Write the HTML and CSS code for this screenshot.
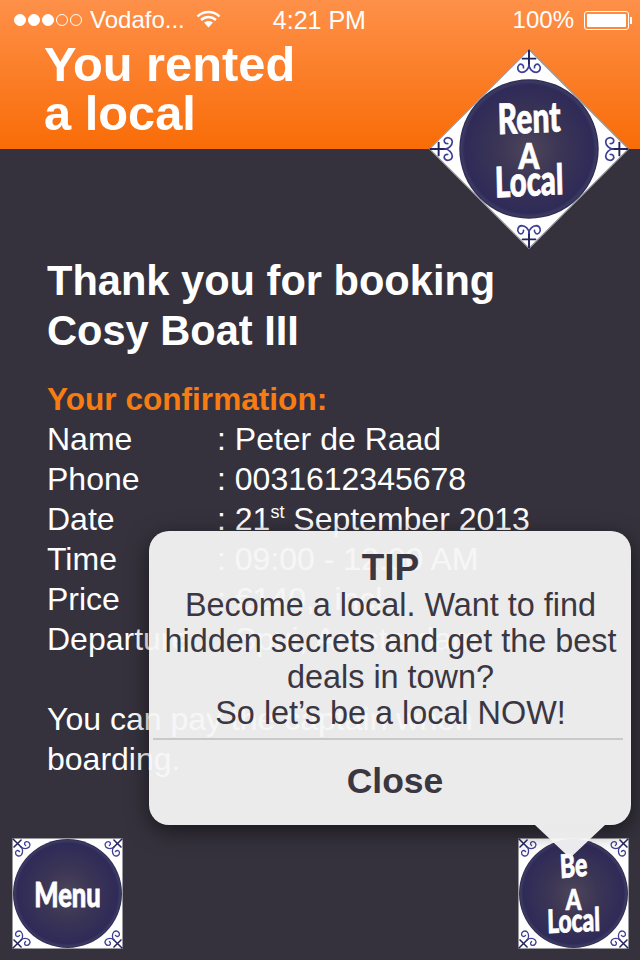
FILE: index.html
```html
<!DOCTYPE html>
<html lang="en">
<head>
<meta charset="utf-8">
<title>You rented a local</title>
<link rel="stylesheet" href="styles.css">
</head>
<body>
<svg class="defs" width="0" height="0" aria-hidden="true">
  <defs>
    <radialGradient id="disc" cx="50%" cy="50%" r="50%">
      <stop offset="0" stop-color="#4c4559"/>
      <stop offset="0.5" stop-color="#3a3455"/>
      <stop offset="0.92" stop-color="#2f2b58"/>
      <stop offset="0.97" stop-color="#3d3a62"/>
      <stop offset="1" stop-color="#2a2850"/>
    </radialGradient>
    <g id="orn" fill="none" stroke="#3f3f96" stroke-width="1.3" stroke-linecap="round">
      <path d="M1 1 L9 9 M2 9 L9 2" stroke="#23235e" stroke-width="1.5"/>
      <path d="M9 9 C11 11 15 11 17 9 C19 6.500 17 3.500 14.500 3.500 C12.500 3.500 11.500 6 13.500 7.500"/>
      <path d="M9 9 C11 11 11 15 9 17 C6.500 19 3.500 17 3.500 14.500 C3.500 12.500 6 11.500 7.500 13.500"/>
    </g>
    <g id="tile">
      <rect x="0.5" y="0.5" width="109" height="109" fill="#fff" stroke="#9a9a9e"/>
      <use href="#orn"/>
      <use href="#orn" transform="translate(110 0) scale(-1 1)"/>
      <use href="#orn" transform="translate(0 110) scale(1 -1)"/>
      <use href="#orn" transform="translate(110 110) scale(-1 -1)"/>
      <circle cx="55" cy="55" r="54" fill="url(#disc)"/>
    </g>
  </defs>
</svg>
<div class="screen">
  <header class="top">
    <div class="status">
      <div class="status-left">
        <span class="dots"><i class="on"></i><i class="on"></i><i class="on"></i><i></i><i></i></span>
        <span class="carrier">Vodafo...</span>
        <svg class="wifi" width="25" height="18" viewBox="0 0 24 18" aria-hidden="true">
          <path d="M1 6.500 C7 0.500 17 0.500 23 6.500 M4.500 10 C9 6 15 6 19.500 10" fill="none" stroke="#fff" stroke-width="2.400"/>
          <path d="M7.500 12.500 C10 10.400 14 10.400 16.500 12.500 L12 17.500 Z" fill="#fff"/>
        </svg>
      </div>
      <span class="clock">4:21 PM</span>
      <div class="status-right">
        <span>100%</span>
        <span class="battery"><span class="battery-fill"></span></span>
        <span class="battery-tip"></span>
      </div>
    </div>
    <h1 class="page-title">You rented<br>a local</h1>
  </header>

  <main class="content">
    <h2 class="thanks">Thank you for booking<br>Cosy Boat III</h2>
    <h3 class="confirm">Your confirmation:</h3>
    <dl class="details">
      <div class="row"><dt>Name</dt><dd>: Peter de Raad</dd></div>
      <div class="row"><dt>Phone</dt><dd>: 0031612345678</dd></div>
      <div class="row"><dt>Date</dt><dd>: 21<sup>st</sup> September 2013</dd></div>
      <div class="row"><dt>Time</dt><dd>: 09:00 - 12:00 AM</dd></div>
      <div class="row"><dt>Price</dt><dd>: €140,- incl.</dd></div>
      <div class="row"><dt>Departure</dt><dd>: Spui, Amsterdam</dd></div>
    </dl>
    <p class="note">You can pay the captain when<br>boarding.</p>
  </main>

  <div class="badge badge-rent">
    <svg class="tile-svg" width="142" height="142" viewBox="0 0 110 110" aria-hidden="true"><use href="#tile"/></svg>
    <div class="badge-label rent-label">
      <span class="ln ln-rent">Rent</span>
      <span class="ln ln-a">A</span>
      <span class="ln ln-local">Local</span>
    </div>
  </div>

  <div class="badge badge-menu">
    <svg class="tile-svg" width="111" height="111" viewBox="0 0 110 110" aria-hidden="true"><use href="#tile"/></svg>
    <div class="badge-label menu-label"><span class="ln ln-menu">Menu</span></div>
  </div>

  <div class="badge badge-be">
    <svg class="tile-svg" width="111" height="111" viewBox="0 0 110 110" aria-hidden="true"><use href="#tile"/></svg>
    <div class="badge-label be-label">
      <span class="ln ln-be">Be</span>
      <span class="ln ln-a2">A</span>
      <span class="ln ln-local2">Local</span>
    </div>
  </div>

  <div class="popup">
    <div class="popup-body">
      <div class="popup-title">TIP</div>
      <p class="popup-text">Become a local. Want to find<br>hidden secrets and get the best<br>deals in town?<br>So let’s be a local NOW!</p>
    </div>
    <div class="popup-close">Close</div>
    <span class="popup-tail"></span>
  </div>
</div>
</body>
</html>
```
FILE: styles.css
```css
* { box-sizing: border-box; }
html, body { margin: 0; padding: 0; }
body {
  width: 640px;
  height: 960px;
  overflow: hidden;
  background: #35323d;
  font-family: "Liberation Sans", Arial, sans-serif;
  color: #fff;
}
.defs { position: absolute; }
.screen { position: relative; width: 640px; height: 960px; overflow: hidden; }

.top {
  height: 149px;
  background: linear-gradient(#fe9049, #f96c07);
}
.status {
  height: 40px;
  display: flex;
  align-items: center;
  padding: 0 8px 0 14px;
  font-size: 24px;
  color: #fff;
}
.status-left { display: flex; align-items: center; width: 259px; }
.dots { display: flex; gap: 2px; margin-right: 8px; }
.dots i {
  width: 12px; height: 12px; border-radius: 50%;
  border: 1.5px solid #fff;
}
.dots i.on { background: #fff; }
.wifi { margin-left: 11px; margin-top: -3px; }
.clock { width: 240px; font-size: 25px; }
.status-right { display: flex; align-items: center; }
.battery {
  width: 45px; height: 19px; margin-left: 10px; padding: 2px;
  border: 1.5px solid #fff; border-radius: 3px;
}
.battery-fill { display: block; height: 100%; background: #fff; border-radius: 1px; }
.battery-tip { width: 2px; height: 7px; margin-left: 1px; background: #fff; }

.page-title {
  margin: 0;
  padding-left: 44px;
  font-size: 48.8px;
  line-height: 49px;
  font-weight: 700;
}

.content { padding: 107px 0 0 47px; }
.thanks { margin: 0; font-size: 41.6px; line-height: 50px; font-weight: 700; }
.confirm {
  margin: 23px 0 0;
  font-size: 31.6px;
  line-height: 40px;
  font-weight: 700;
  color: #f77c14;
}
.details { margin: 0; font-size: 32px; line-height: 40px; }
.row { display: flex; height: 40px; }
.row dt { width: 170px; }
.row dd { margin: 0; }
.row sup { font-size: 18px; line-height: 0; vertical-align: 12px; }
.note { margin: 40px 0 0; font-size: 32px; line-height: 40px; }

.badge { position: absolute; }
.tile-svg { display: block; }
.badge-label {
  position: absolute;
  left: 0; right: 0;
  text-align: center;
  font-family: Lato, "DejaVu Sans", sans-serif;
  font-weight: 900;
  color: #fff;
  -webkit-text-stroke: 0.7px #fff;
}
.ln { display: block; white-space: nowrap; }

.badge-rent { left: 458px; top: 78px; width: 142px; height: 142px; }
.badge-rent .tile-svg { transform: rotate(45deg); }
.rent-label { top: 22px; font-size: 35px; line-height: 32px; }
.ln-rent { transform: scale(0.86, 1.2) rotate(-2deg); }
.ln-a { margin-top: 6px; font-size: 35px; transform: scale(0.85, 1.05); }
.ln-local { margin-top: -7px; transform: scale(0.84, 1.2) rotate(-2deg); }

.badge-menu { left: 12px; top: 838px; width: 111px; height: 111px; }
.menu-label { top: 36px; font-size: 29px; line-height: 40px; }
.ln-menu { transform: scale(0.88, 1.2); }

.badge-be { left: 518px; top: 838px; width: 111px; height: 111px; }
.be-label { top: 13px; font-size: 27px; line-height: 28px; }
.ln-be { transform: scale(0.85, 1.2) rotate(-4deg); }
.ln-a2 { margin-top: 6px; font-size: 28px; transform: scale(0.8, 1); }
.ln-local2 { margin-top: -7px; transform: scale(0.84, 1.2) rotate(-2deg); }

.popup {
  position: absolute;
  left: 149px; top: 531px;
  width: 482px; height: 294px;
  background: rgba(245, 245, 245, 0.95);
  border-radius: 20px;
  box-shadow: 0 6px 22px rgba(0, 0, 0, 0.55);
  color: #3a3742;
}
.popup-body {
  height: 209px;
  margin: 0 8px 0 4px;
  padding: 18px 0 0 5px;
  border-bottom: 2px solid #c9c9c9;
  text-align: center;
}
.popup-title { font-size: 37px; line-height: 38px; font-weight: 700; }
.popup-text { margin: 0; font-size: 32.4px; line-height: 36px; }
.popup-close {
  padding: 21px 0 0 10px;
  text-align: center;
  font-size: 35.5px;
  line-height: 40px;
  font-weight: 700;
}
.popup-tail {
  position: absolute;
  left: 386px; top: 294px;
  width: 0; height: 0;
  border-left: 35px solid transparent;
  border-right: 35px solid transparent;
  border-top: 33px solid rgba(245, 245, 245, 0.95);
}
```
